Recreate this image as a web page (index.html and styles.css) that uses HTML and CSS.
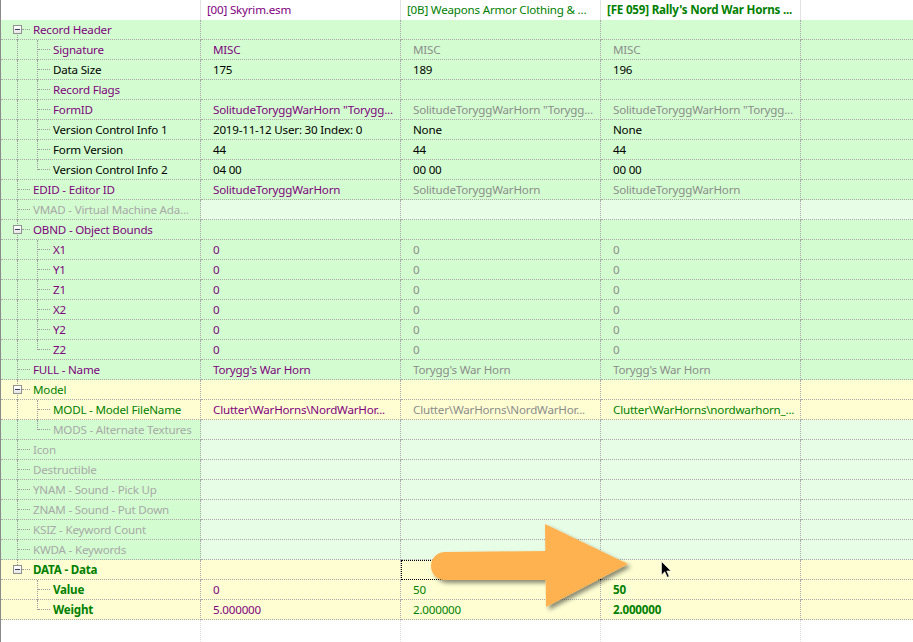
FILE: index.html
```html
<!DOCTYPE html>
<html>
<head>
<meta charset="utf-8">
<link rel="stylesheet" href="styles.css">
</head>
<body>
<div class="grid">
  <div class="row h">
    <div class="c"></div>
    <div class="c p">[00] Skyrim.esm</div>
    <div class="c gn">[0B] Weapons Armor Clothing &amp; ...</div>
    <div class="c gn b">[FE 059] Rally's Nord War Horns ...</div>
    <div class="c"></div>
  </div>

  <div class="row g">
    <div class="c t"><span class="i bf"><i class="box"></i></span><span class="l p">Record Header</span></div>
    <div class="c"></div><div class="c"></div><div class="c"></div><div class="c"></div>
  </div>
  <div class="row g">
    <div class="c t"><span class="i pipe"></span><span class="i tee"></span><span class="l p">Signature</span></div>
    <div class="c p">MISC</div><div class="c gr">MISC</div><div class="c gr">MISC</div><div class="c"></div>
  </div>
  <div class="row g">
    <div class="c t"><span class="i pipe"></span><span class="i tee"></span><span class="l k">Data Size</span></div>
    <div class="c k">175</div><div class="c k">189</div><div class="c k">196</div><div class="c"></div>
  </div>
  <div class="row g">
    <div class="c t"><span class="i pipe"></span><span class="i tee"></span><span class="l p">Record Flags</span></div>
    <div class="c"></div><div class="c"></div><div class="c"></div><div class="c"></div>
  </div>
  <div class="row g">
    <div class="c t"><span class="i pipe"></span><span class="i tee"></span><span class="l p">FormID</span></div>
    <div class="c p">SolitudeToryggWarHorn "Torygg...</div><div class="c gr">SolitudeToryggWarHorn "Torygg...</div><div class="c gr">SolitudeToryggWarHorn "Torygg...</div><div class="c"></div>
  </div>
  <div class="row g">
    <div class="c t"><span class="i pipe"></span><span class="i tee"></span><span class="l k">Version Control Info 1</span></div>
    <div class="c k">2019-11-12 User: 30 Index: 0</div><div class="c k">None</div><div class="c k">None</div><div class="c"></div>
  </div>
  <div class="row g">
    <div class="c t"><span class="i pipe"></span><span class="i tee"></span><span class="l k">Form Version</span></div>
    <div class="c k">44</div><div class="c k">44</div><div class="c k">44</div><div class="c"></div>
  </div>
  <div class="row g">
    <div class="c t"><span class="i pipe"></span><span class="i ell"></span><span class="l k">Version Control Info 2</span></div>
    <div class="c k">04 00</div><div class="c k">00 00</div><div class="c k">00 00</div><div class="c"></div>
  </div>
  <div class="row g">
    <div class="c t"><span class="i tee"></span><span class="l p">EDID - Editor ID</span></div>
    <div class="c p">SolitudeToryggWarHorn</div><div class="c gr">SolitudeToryggWarHorn</div><div class="c gr">SolitudeToryggWarHorn</div><div class="c"></div>
  </div>
  <div class="row g">
    <div class="c t"><span class="i tee"></span><span class="l dis">VMAD - Virtual Machine Ada...</span></div>
    <div class="c lt"></div><div class="c lt"></div><div class="c lt"></div><div class="c lt"></div>
  </div>
  <div class="row g">
    <div class="c t"><span class="i bm"><i class="box"></i></span><span class="l p">OBND - Object Bounds</span></div>
    <div class="c"></div><div class="c"></div><div class="c"></div><div class="c"></div>
  </div>
  <div class="row g">
    <div class="c t"><span class="i pipe"></span><span class="i tee"></span><span class="l p">X1</span></div>
    <div class="c p">0</div><div class="c gr">0</div><div class="c gr">0</div><div class="c"></div>
  </div>
  <div class="row g">
    <div class="c t"><span class="i pipe"></span><span class="i tee"></span><span class="l p">Y1</span></div>
    <div class="c p">0</div><div class="c gr">0</div><div class="c gr">0</div><div class="c"></div>
  </div>
  <div class="row g">
    <div class="c t"><span class="i pipe"></span><span class="i tee"></span><span class="l p">Z1</span></div>
    <div class="c p">0</div><div class="c gr">0</div><div class="c gr">0</div><div class="c"></div>
  </div>
  <div class="row g">
    <div class="c t"><span class="i pipe"></span><span class="i tee"></span><span class="l p">X2</span></div>
    <div class="c p">0</div><div class="c gr">0</div><div class="c gr">0</div><div class="c"></div>
  </div>
  <div class="row g">
    <div class="c t"><span class="i pipe"></span><span class="i tee"></span><span class="l p">Y2</span></div>
    <div class="c p">0</div><div class="c gr">0</div><div class="c gr">0</div><div class="c"></div>
  </div>
  <div class="row g">
    <div class="c t"><span class="i pipe"></span><span class="i ell"></span><span class="l p">Z2</span></div>
    <div class="c p">0</div><div class="c gr">0</div><div class="c gr">0</div><div class="c"></div>
  </div>
  <div class="row g">
    <div class="c t"><span class="i tee"></span><span class="l p">FULL - Name</span></div>
    <div class="c p">Torygg's War Horn</div><div class="c gr">Torygg's War Horn</div><div class="c gr">Torygg's War Horn</div><div class="c"></div>
  </div>
  <div class="row y">
    <div class="c t"><span class="i bm"><i class="box"></i></span><span class="l gn">Model</span></div>
    <div class="c"></div><div class="c"></div><div class="c"></div><div class="c"></div>
  </div>
  <div class="row y">
    <div class="c t"><span class="i pipe"></span><span class="i tee"></span><span class="l gn">MODL - Model FileName</span></div>
    <div class="c p">Clutter\WarHorns\NordWarHor...</div><div class="c gr">Clutter\WarHorns\NordWarHor...</div><div class="c gn">Clutter\WarHorns\nordwarhorn_...</div><div class="c"></div>
  </div>
  <div class="row g">
    <div class="c t"><span class="i pipe"></span><span class="i ell"></span><span class="l dis">MODS - Alternate Textures</span></div>
    <div class="c lt"></div><div class="c lt"></div><div class="c lt"></div><div class="c lt"></div>
  </div>
  <div class="row g">
    <div class="c t"><span class="i tee"></span><span class="l dis">Icon</span></div>
    <div class="c lt"></div><div class="c lt"></div><div class="c lt"></div><div class="c lt"></div>
  </div>
  <div class="row g">
    <div class="c t"><span class="i tee"></span><span class="l dis">Destructible</span></div>
    <div class="c lt"></div><div class="c lt"></div><div class="c lt"></div><div class="c lt"></div>
  </div>
  <div class="row g">
    <div class="c t"><span class="i tee"></span><span class="l dis">YNAM - Sound - Pick Up</span></div>
    <div class="c lt"></div><div class="c lt"></div><div class="c lt"></div><div class="c lt"></div>
  </div>
  <div class="row g">
    <div class="c t"><span class="i tee"></span><span class="l dis">ZNAM - Sound - Put Down</span></div>
    <div class="c lt"></div><div class="c lt"></div><div class="c lt"></div><div class="c lt"></div>
  </div>
  <div class="row g">
    <div class="c t"><span class="i tee"></span><span class="l dis">KSIZ - Keyword Count</span></div>
    <div class="c lt"></div><div class="c lt"></div><div class="c lt"></div><div class="c lt"></div>
  </div>
  <div class="row g">
    <div class="c t"><span class="i tee"></span><span class="l dis">KWDA - Keywords</span></div>
    <div class="c lt"></div><div class="c lt"></div><div class="c lt"></div><div class="c lt"></div>
  </div>
  <div class="row y">
    <div class="c t"><span class="i bl"><i class="box"></i></span><span class="l gn b">DATA - Data</span></div>
    <div class="c"></div><div class="c focus"></div><div class="c"></div><div class="c"></div>
  </div>
  <div class="row y">
    <div class="c t"><span class="i"></span><span class="i tee"></span><span class="l gn b">Value</span></div>
    <div class="c p">0</div><div class="c gn">50</div><div class="c gn b">50</div><div class="c"></div>
  </div>
  <div class="row y">
    <div class="c t"><span class="i"></span><span class="i ell"></span><span class="l gn b">Weight</span></div>
    <div class="c p">5.000000</div><div class="c gn">2.000000</div><div class="c gn b">2.000000</div><div class="c"></div>
  </div>

  <div class="row fill">
    <div class="c"></div><div class="c"></div><div class="c"></div><div class="c"></div><div class="c"></div>
  </div>

  <svg class="arrow" width="230" height="110" viewBox="420 510 230 110">
    <defs>
      <filter id="sh" x="-20%" y="-20%" width="140%" height="140%">
        <feDropShadow dx="3" dy="3" stdDeviation="2" flood-color="#000" flood-opacity="0.45"/>
      </filter>
    </defs>
    <g filter="url(#sh)" fill="#ffb24f">
      <path d="M445 552 L550 551 L550 580 L445 580 A14 14 0 0 1 445 552 Z"/>
      <polygon points="545,524 628,564 546,607"/>
    </g>
  </svg>
  <svg class="cursor" width="12" height="18" viewBox="0 0 12 18">
    <path d="M0.5 0.5 L0.5 14 L3.8 10.8 L6.3 16.3 L8.2 15.4 L5.8 10 L10 10 Z" fill="#000" stroke="#fff" stroke-width="0.6"/>
  </svg>
</div>
</body>
</html>
```

FILE: styles.css
```css
html, body {
  margin: 0;
  padding: 0;
  background: #ffffff;
}

body {
  font-family: "Noto Sans", "Open Sans", sans-serif;
  font-size: 11.6px;
  letter-spacing: -0.2px;
  color: #000;
}

.grid {
  position: relative;
  display: flex;
  flex-direction: column;
  min-height: 100vh;
  border-left: 1px solid #8a8a8a;
  box-sizing: border-box;
  overflow: hidden;
}

.row {
  display: grid;
  grid-template-columns: 200px 200px 200px 200px 1fr;
  height: 20px;
  flex: none;
}

.c {
  box-sizing: border-box;
  height: 20px;
  padding-left: 12px;
  line-height: 19px;
  border-right: 1px dotted #a9a9a9;
  border-bottom: 1px dotted #a9a9a9;
  white-space: nowrap;
  overflow: hidden;
}

.c:last-child {
  border-right: 0;
}

.h .c {
  border-bottom: 0;
  border-right: 1px solid #e2e2e2;
  padding-left: 6px;
  line-height: 20px;
}

.h .c:last-child {
  border-right: 0;
}

.fill {
  flex: 1;
  height: auto;
}

.fill .c {
  height: auto;
  border-bottom: 0;
  border-right: 1px dotted #dcdcdc;
}

.fill .c:last-child {
  border-right: 0;
}

.g { background: #d3fdd0; }
.y { background: #fefed2; }
.g .lt, .y .lt { background: #e8fde6; }

.p { color: #800080; }
.k { color: #000000; }
.gr { color: #8c8c8c; }
.dis { color: #a8a8a8; }
.gn { color: #008000; }
.b { font-weight: 700; }

.t {
  display: flex;
  padding-left: 5px;
  overflow: visible;
}

.i {
  position: relative;
  flex: none;
  width: 20px;
  height: 19px;
}

.l {
  margin-left: 7px;
}

.pipe::before,
.tee::before,
.ell::before,
.bf::before,
.bm::before,
.bl::before {
  content: "";
  position: absolute;
  left: 11px;
  top: 0;
  bottom: -1px;
  border-left: 1px dotted #9c9c9c;
}

.ell::before { bottom: auto; height: 10px; }
.bf::before { top: 13px; }
.bl::before { bottom: auto; height: 5px; }

.tee::after,
.ell::after {
  content: "";
  position: absolute;
  left: 12px;
  top: 9px;
  width: 12px;
  border-top: 1px dotted #9c9c9c;
}

.bf::after,
.bm::after,
.bl::after {
  content: "";
  position: absolute;
  left: 16px;
  top: 9px;
  width: 8px;
  border-top: 1px dotted #9c9c9c;
}

.box {
  position: absolute;
  left: 7px;
  top: 5px;
  width: 9px;
  height: 9px;
  box-sizing: border-box;
  border: 1px solid #919191;
  background: linear-gradient(#ffffff, #e6e6e6);
  z-index: 1;
}

.box::after {
  content: "";
  position: absolute;
  left: 1px;
  top: 3px;
  width: 5px;
  height: 1px;
  background: #3c3c5a;
}

.focus {
  outline: 1px dotted #000;
  outline-offset: -1px;
}

.arrow {
  position: absolute;
  left: 419px;
  top: 510px;
}

.cursor {
  position: absolute;
  left: 660px;
  top: 561px;
}
```
